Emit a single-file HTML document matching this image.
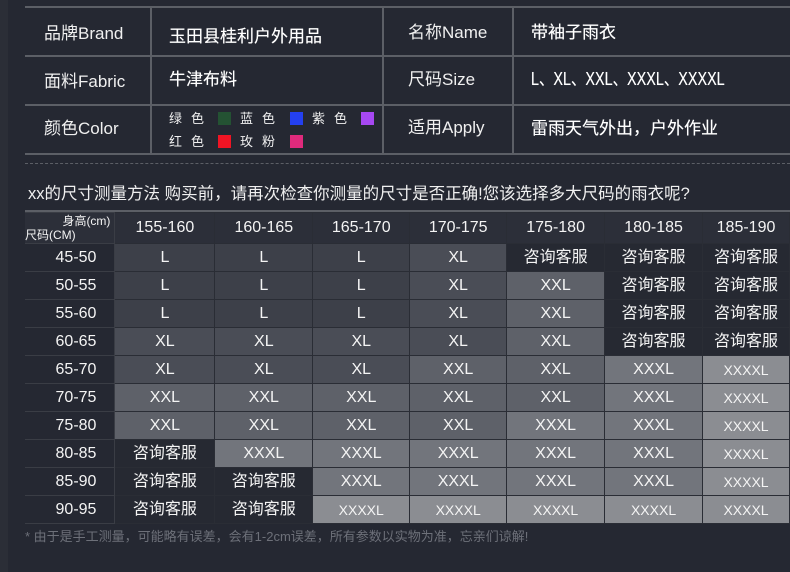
<!DOCTYPE html>
<html><head><meta charset="utf-8"><style>
*{margin:0;padding:0;box-sizing:border-box}
body{width:790px;height:572px;background:#252832;position:relative;overflow:hidden;font-family:"Liberation Sans","Noto Sans CJK SC",sans-serif;color:#f0f0f0}
.strip{position:absolute;left:0;top:0;width:8px;height:572px;background:#2b2e37}
.h{position:absolute;background:#5c5f66;height:2px}
.v{position:absolute;background:#5c5f66;width:2px}
.t{position:absolute;font-size:17px;white-space:nowrap;line-height:20px}
.b{font-size:17px;font-weight:normal;color:#fff;text-shadow:0 0 0.4px #fff}
.sw{position:absolute;width:13px;height:13px}
.c{position:absolute;font-size:13px;line-height:14px}
table{position:absolute;left:25px;top:212px;border-collapse:collapse;table-layout:fixed}
td{border:1px solid #2a2d35;text-align:center;font-size:16px;height:28px;line-height:16px;padding:0;color:#f4f4f4;vertical-align:middle;overflow:hidden}
tr.hd td{height:31px;background:#2c2f39;font-size:16px}
td.lb{background:#252832;text-align:right;padding-right:18px;border-color:#3a3d45;border-left:none}
.a{background:#262932}.L{background:#3d4049}.X{background:#4a4d56}.X2{background:#5e6169}.X3{background:#72757c}.X4{background:#8b8d92;font-size:14px}
</style></head><body>
<div class="strip"></div>
<div class="h" style="left:25px;top:6px;width:765px"></div>
<div class="h" style="left:25px;top:55px;width:765px"></div>
<div class="h" style="left:25px;top:104px;width:765px"></div>
<div class="h" style="left:25px;top:153px;width:765px"></div>
<div class="v" style="left:150px;top:6px;height:149px"></div>
<div class="v" style="left:382px;top:6px;height:149px"></div>
<div class="v" style="left:512px;top:6px;height:149px"></div>
<div style="position:absolute;left:25px;top:163px;width:765px;border-top:1px dashed #5c5f66"></div>
<div class="t" style="left:44px;top:24px">品牌Brand</div>
<div class="t b" style="left:169px;top:27px">玉田县桂利户外用品</div>
<div class="t" style="left:44px;top:72px">面料Fabric</div>
<div class="t b" style="left:169px;top:70px">牛津布料</div>
<div class="t" style="left:44px;top:119px">颜色Color</div>
<div class="c" style="left:169px;top:112px;letter-spacing:9px">绿色</div>
<div class="sw" style="left:218px;top:112px;background:#245233"></div>
<div class="c" style="left:240px;top:112px;letter-spacing:9px">蓝色</div>
<div class="sw" style="left:290px;top:112px;background:#2440f0"></div>
<div class="c" style="left:312px;top:112px;letter-spacing:9px">紫色</div>
<div class="sw" style="left:361px;top:112px;background:#a648f2"></div>
<div class="c" style="left:169px;top:135px;letter-spacing:9px">红色</div>
<div class="sw" style="left:218px;top:135px;background:#f01424"></div>
<div class="c" style="left:240px;top:135px;letter-spacing:9px">玫粉</div>
<div class="sw" style="left:290px;top:135px;background:#e02a7c"></div>
<div class="t" style="left:408px;top:23px">名称Name</div>
<div class="t b" style="left:531px;top:23px">带袖子雨衣</div>
<div class="t" style="left:408px;top:70px">尺码Size</div>
<div class="t b" style="left:531px;top:69px;font-size:18px;transform:scaleX(0.8);transform-origin:left">L、XL、XXL、XXXL、XXXXL</div>
<div class="t" style="left:408px;top:118px">适用Apply</div>
<div class="t b" style="left:531px;top:119px">雷雨天气外出，户外作业</div>
<div class="t" style="left:28px;top:184px;font-size:16.5px">xx的尺寸测量方法 购买前，请再次检查你测量的尺寸是否正确!您该选择多大尺码的雨衣呢?</div>
<div style="position:absolute;left:25px;top:210px;width:765px;height:2px;background:#5c5f66"></div>
<table>
<colgroup><col style="width:90px"><col style="width:100px"><col style="width:98px"><col style="width:97px"><col style="width:97px"><col style="width:98px"><col style="width:98px"><col style="width:87px"></colgroup>
<tr class="hd"><td class="lb" style="background:#2c2f39;position:relative;padding:0"><span style="position:absolute;right:4px;top:2px;font-size:12px;line-height:13px">身高(cm)</span><span style="position:absolute;left:0;bottom:1px;font-size:12px;line-height:13px">尺码(CM)</span></td><td>155-160</td><td>160-165</td><td>165-170</td><td>170-175</td><td>175-180</td><td>180-185</td><td>185-190</td></tr>
<tr><td class="lb">45-50</td><td class="L">L</td><td class="L">L</td><td class="L">L</td><td class="X">XL</td><td class="a">咨询客服</td><td class="a">咨询客服</td><td class="a">咨询客服</td></tr>
<tr><td class="lb">50-55</td><td class="L">L</td><td class="L">L</td><td class="L">L</td><td class="X">XL</td><td class="X2">XXL</td><td class="a">咨询客服</td><td class="a">咨询客服</td></tr>
<tr><td class="lb">55-60</td><td class="L">L</td><td class="L">L</td><td class="L">L</td><td class="X">XL</td><td class="X2">XXL</td><td class="a">咨询客服</td><td class="a">咨询客服</td></tr>
<tr><td class="lb">60-65</td><td class="X">XL</td><td class="X">XL</td><td class="X">XL</td><td class="X">XL</td><td class="X2">XXL</td><td class="a">咨询客服</td><td class="a">咨询客服</td></tr>
<tr><td class="lb">65-70</td><td class="X">XL</td><td class="X">XL</td><td class="X">XL</td><td class="X2">XXL</td><td class="X2">XXL</td><td class="X3">XXXL</td><td class="X4">XXXXL</td></tr>
<tr><td class="lb">70-75</td><td class="X2">XXL</td><td class="X2">XXL</td><td class="X2">XXL</td><td class="X2">XXL</td><td class="X2">XXL</td><td class="X3">XXXL</td><td class="X4">XXXXL</td></tr>
<tr><td class="lb">75-80</td><td class="X2">XXL</td><td class="X2">XXL</td><td class="X2">XXL</td><td class="X2">XXL</td><td class="X3">XXXL</td><td class="X3">XXXL</td><td class="X4">XXXXL</td></tr>
<tr><td class="lb">80-85</td><td class="a">咨询客服</td><td class="X3">XXXL</td><td class="X3">XXXL</td><td class="X3">XXXL</td><td class="X3">XXXL</td><td class="X3">XXXL</td><td class="X4">XXXXL</td></tr>
<tr><td class="lb">85-90</td><td class="a">咨询客服</td><td class="a">咨询客服</td><td class="X3">XXXL</td><td class="X3">XXXL</td><td class="X3">XXXL</td><td class="X3">XXXL</td><td class="X4">XXXXL</td></tr>
<tr><td class="lb">90-95</td><td class="a">咨询客服</td><td class="a">咨询客服</td><td class="X4">XXXXL</td><td class="X4">XXXXL</td><td class="X4">XXXXL</td><td class="X4">XXXXL</td><td class="X4">XXXXL</td></tr>
</table>
<div class="t" style="left:25px;top:527px;font-size:13px;color:#6d7079">* 由于是手工测量，可能略有误差，会有1-2cm误差，所有参数以实物为准，忘亲们谅解!</div>
</body></html>
